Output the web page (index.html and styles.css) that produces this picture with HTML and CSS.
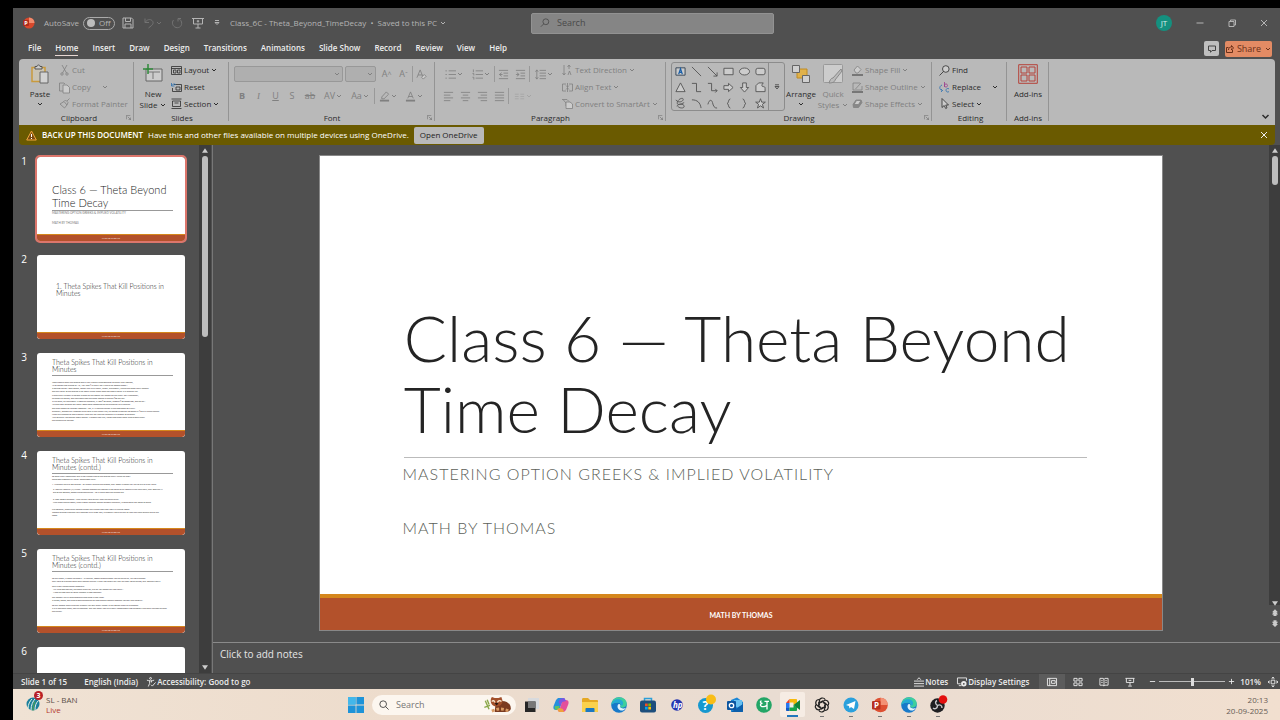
FILE: index.html
```html
<!DOCTYPE html>
<html lang="en">
<head>
<meta charset="utf-8">
<title>Class_6C - Theta_Beyond_TimeDecay</title>
<link rel="stylesheet" href="styles.css">
</head>
<body>
<svg class="defs" aria-hidden="true">
  <symbol id="caret" viewBox="0 0 6 6"><path d="M1 2l2 2 2-2"/></symbol>
  <symbol id="launch" viewBox="0 0 7 7"><path d="M.5 6V.5H6M2.500 2.500l4 4M6.500 3.500v3h-3"/></symbol>
  <symbol id="close" viewBox="0 0 8 8"><path d="M1 1l6 6M7 1L1 7"/></symbol>
  <symbol id="edge" viewBox="0 0 16 16"><circle cx="8" cy="8" r="7.800" fill="#1679c9"/><path d="M.4 8C.4 3.500 3.800.2 8.200.2c4.600 0 7.600 3.100 7.600 6.400 0 2.500-1.900 4.100-4.300 4.100-1.800 0-2.600-.8-2.100-1.700.9-1.900-.6-3.500-3-3.500C3.600 5.500 1.300 6.500.4 8z" fill="#3fcf9c"/><path d="M.4 8C1 4 4 2.200 7.200 2.200c3 0 5 1.800 4.900 4.400-.1 1.300-.8 2-1.200 2.400-.7-2-2.300-3.600-4.700-3.500C3.600 5.500 1.300 6.500.4 8z" fill="#23a9d6"/><path d="M9.400 8.600c-.8 1.200.1 2.900 2.600 2.900 1.300 0 2.300-.4 2.900-.8-.9 2.200-3.200 3.200-5.200 2.700C6.900 12.700 5.800 10 7 7.600c.8-1 2.200-.6 2.400 1z" fill="#dff3fb"/></symbol>
</svg>

<div class="app">
  <header class="titlebar">
    <svg class="logo" viewBox="0 0 12 12"><circle cx="6" cy="6" r="5.500" fill="#d8472b"/><path d="M6 .5A5.500 5.500 0 0 1 11.500 6H6z" fill="#f08b6d"/><rect x="0" y="3" width="6" height="6" rx="1" fill="#b02a1b"/><text x="1.300" y="8" font-size="5.500" font-weight="700" fill="#fff">P</text></svg>
    <label class="autosave">AutoSave <input type="checkbox"><span class="switch">Off</span></label>
    <div class="quick">
      <button aria-label="Save"><svg viewBox="0 0 12 12"><path d="M1 1h8.500L11 2.500V11H1zM3.500 1v3.500h5V1M3 11V7h6v4"/></svg></button>
      <button aria-label="Undo" class="faint wide"><svg viewBox="0 0 12 12"><path d="M2 1.500v4h4M2.200 5.300C4 2.500 7 1.800 9 3.500c2 1.800 1 4-1 5.500L5.500 11"/></svg><svg class="caret"><use href="#caret"/></svg></button>
      <button aria-label="Redo" class="faint"><svg viewBox="0 0 12 12"><path d="M2.500 3C.5 5.500 1.500 9.500 5 10.500s6.500-2 5.500-5.500C10 3 8.500 2 7.500 1.800M7 4.500V1.500h3"/></svg></button>
      <button aria-label="Start slide show"><svg viewBox="0 0 12 12"><path d="M0 1.500h12M1.500 1.500v5.500h9V1.500M6 7v4M3.500 11h5M6 3v2.500M4.800 4.200h2.400"/></svg></button>
      <button aria-label="Customize"><svg class="caret" viewBox="0 0 6 6"><path d="M1 .5h4M1 2.500l2 2 2-2z"/></svg></button>
    </div>
    <h1>Class_6C - Theta_Beyond_TimeDecay &nbsp;•&nbsp; Saved to this PC <svg class="caret"><use href="#caret"/></svg></h1>
    <label class="search"><svg viewBox="0 0 12 12"><circle cx="7" cy="4.500" r="3.500"/><path d="M4.500 7L1 10.500"/></svg><input type="text" placeholder="Search" aria-label="Search"></label>
    <div class="window">
      <span class="avatar">JT</span>
      <button aria-label="Minimize"><svg viewBox="0 0 8 8"><path d="M.5 4h7"/></svg></button>
      <button aria-label="Restore"><svg viewBox="0 0 8 8"><path d="M1 2.500h5v5H1zM2.500 2.500V1h5v5H6"/></svg></button>
      <button aria-label="Close"><svg viewBox="0 0 8 8"><use href="#close"/></svg></button>
    </div>
  </header>

  <nav class="tabs">
    <a href="#file">File</a><a href="#home" class="active">Home</a><a href="#insert">Insert</a><a href="#draw">Draw</a><a href="#design">Design</a><a href="#transitions">Transitions</a><a href="#animations">Animations</a><a href="#slideshow">Slide Show</a><a href="#record">Record</a><a href="#review">Review</a><a href="#view">View</a><a href="#help">Help</a>
    <button class="comment" aria-label="Comments"><svg viewBox="0 0 8 8"><path d="M.5 1h7v4.500H4L2.500 7.300V5.500h-2z"/></svg></button>
    <button class="share"><svg viewBox="0 0 8 8"><path d="M2.500 2.500h-2v5h6V5M2.500 5c0-2 1-3 3-3V.5L7.500 3 5.500 5V3.500"/></svg>Share <svg class="caret"><use href="#caret"/></svg></button>
  </nav>

  <section class="ribbon">
    <div class="group clipboard">
      <div class="body">
        <button class="big"><svg viewBox="0 0 20 20"><path d="M2 3.500h13v14H2z" fill="#c9c3b4" stroke="#c99a3c" stroke-width="1.500"/><path d="M5 5V2.500h2C7 .5 10 .5 10 2.500h2V5z" fill="#ccc" stroke="#555"/><path d="M10 8h8v11h-8z" fill="#d2d2d2" stroke="#666"/></svg><span>Paste</span><svg class="caret"><use href="#caret"/></svg></button>
        <div class="stack off">
          <button><svg viewBox="0 0 11 11"><path d="M3 0l4.500 8M8 0L3.500 8"/><circle cx="3" cy="9" r="1.200"/><circle cx="8" cy="9" r="1.200"/></svg>Cut</button>
          <button><svg viewBox="0 0 11 11"><path d="M4 9H.5V1H5l1 1" /><path d="M4 3h4l2.500 2.500V11H4z" fill="#ccc"/></svg>Copy <svg class="caret gap"><use href="#caret"/></svg></button>
          <button><svg viewBox="0 0 11 11"><path d="M1 6l4-2.500L8 7l-2.500 3zM5 3.500L6.500 2 9 4.500 8 7M8 3l2.500-2.500"/></svg>Format Painter</button>
        </div>
      </div>
      <h2>Clipboard<svg class="launch"><use href="#launch"/></svg></h2>
    </div>

    <div class="group slides">
      <div class="body">
        <button class="big"><svg viewBox="0 0 20 20"><path d="M3 5h16v12H3z" fill="#ccc" stroke="#666"/><path d="M5 8h12M10 8v7" stroke="#777"/><path d="M5 0v10M0 5h10" stroke="#2f8a3a" stroke-width="1.500"/></svg><span>New<br>Slide <svg class="caret"><use href="#caret"/></svg></span></button>
        <div class="stack">
          <button><svg viewBox="0 0 11 11"><path d="M.5 1.500h10v8H.5zM.5 3.500h10" /><path d="M2.500 5h2.500v3H2.500zM6.500 5H9v3H6.500z"/></svg>Layout <svg class="caret"><use href="#caret"/></svg></button>
          <button><svg viewBox="0 0 11 11"><path d="M3 2.500h7.500v7H1.500V6"/><path d="M.5 1v3h3M.8 3.600C2 1.500 4 1.500 5 3" stroke="#2a6fb0"/><path d="M5 5h4v3H5z"/></svg>Reset</button>
          <button><svg viewBox="0 0 11 11"><path d="M.5 1h10M.5 10.500h10M1.500 3h8v5.500h-8z"/><path d="M3.500 5h4"/></svg>Section <svg class="caret"><use href="#caret"/></svg></button>
        </div>
      </div>
      <h2>Slides</h2>
    </div>

    <div class="group font">
      <div class="body rows off">
        <div class="line">
          <span class="combo name"><select aria-label="Font"><option></option></select><svg class="caret"><use href="#caret"/></svg></span>
          <span class="combo size"><select aria-label="Font size"><option></option></select><svg class="caret"><use href="#caret"/></svg></span>
          <button class="c18 up">A<sup>^</sup></button><button class="c18">A<sup>ˇ</sup></button><i class="sep"></i><button class="c18" aria-label="Clear formatting"><svg viewBox="0 0 12 12"><path d="M1 9.500L4.500 1 8 9.500M2.200 6.500h4.600"/><path d="M6 9l3-3 2 2-3 3z" fill="#ccc"/></svg></button>
        </div>
        <div class="line">
          <button class="c16"><b>B</b></button><button class="c17 serif"><em>I</em></button><button class="c17"><u>U</u></button><button class="c16">S</button><button class="c20"><s>ab</s></button><button class="c26">AV<svg class="caret"><use href="#caret"/></svg></button><button class="c28">Aa<svg class="caret"><use href="#caret"/></svg></button><i class="sep"></i><button class="c26" aria-label="Highlight"><svg viewBox="0 0 12 12"><path d="M3 6.500L8 1l2.500 2.500-5 5H3z"/><path d="M1 10.500h10" stroke-width="2"/></svg><svg class="caret"><use href="#caret"/></svg></button><button class="c26" aria-label="Font colour"><svg viewBox="0 0 12 12"><path d="M3 8l3-7 3 7M4 6h4"/><path d="M1 10.500h10" stroke-width="2"/></svg><svg class="caret"><use href="#caret"/></svg></button>
        </div>
      </div>
      <h2>Font<svg class="launch"><use href="#launch"/></svg></h2>
    </div>

    <div class="group paragraph">
      <div class="body">
        <div class="rows off">
          <div class="line">
            <button class="c27" aria-label="Bullets"><svg viewBox="0 0 12 12"><path d="M4 2h8M4 6h8M4 10h8M.5 2H2M.5 6H2M.5 10H2"/></svg><svg class="caret"><use href="#caret"/></svg></button>
            <button class="c27" aria-label="Numbering"><svg viewBox="0 0 12 12"><path d="M4 2h8M4 6h8M4 10h8M1.500.5v3M.5 5h1.500v2M.5 9h1.500v2.500"/></svg><svg class="caret"><use href="#caret"/></svg></button><i class="sep"></i>
            <button class="c17" aria-label="Decrease indent"><svg viewBox="0 0 12 12"><path d="M1 1.500h10M6 4.500h5M6 7.500h5M1 10.500h10M4 4L1.500 6 4 8M1.500 6H5"/></svg></button>
            <button class="c17" aria-label="Increase indent"><svg viewBox="0 0 12 12"><path d="M1 1.500h10M6 4.500h5M6 7.500h5M1 10.500h10M2 4l2.500 2L2 8M1 6h3.500"/></svg></button><i class="sep"></i>
            <button class="c27" aria-label="Line spacing"><svg viewBox="0 0 12 12"><path d="M5 1.500h7M5 4.500h7M5 7.500h7M5 10.500h7M2 1v10M.5 3L2 1l1.500 2M.5 9L2 11l1.500-2"/></svg><svg class="caret"><use href="#caret"/></svg></button>
          </div>
          <div class="line">
            <button class="c17" aria-label="Align left"><svg viewBox="0 0 12 12"><path d="M1 1.500h10M1 4.500h7M1 7.500h10M1 10.500h7"/></svg></button>
            <button class="c17" aria-label="Centre"><svg viewBox="0 0 12 12"><path d="M1 1.500h10M3 4.500h6M1 7.500h10M3 10.500h6"/></svg></button>
            <button class="c17" aria-label="Align right"><svg viewBox="0 0 12 12"><path d="M1 1.500h10M4 4.500h7M1 7.500h10M4 10.500h7"/></svg></button>
            <button class="c17" aria-label="Justify"><svg viewBox="0 0 12 12"><path d="M1 1.500h10M1 4.500h10M1 7.500h10M1 10.500h10"/></svg></button><i class="sep"></i>
            <button class="c27 faint" aria-label="Columns"><svg viewBox="0 0 12 12"><path d="M1 3.500h4M7 3.500h4M1 6h4M7 6h4M1 8.500h4M7 8.500h4"/></svg><svg class="caret"><use href="#caret"/></svg></button>
          </div>
        </div>
        <div class="stack off">
          <button><svg viewBox="0 0 11 11"><path d="M2 0v10M.5 8L2 10l1.500-2M7 0v4M5.500 2L7 0l1.500 2M6 10l1.500-4L9 10"/></svg>Text Direction <svg class="caret"><use href="#caret"/></svg></button>
          <button><svg viewBox="0 0 11 11"><path d="M4 2H.5v7H4M7 2h3.500v7H7M5.500 1v9M4 3.500L5.500 5 7 3.500M4 7.500L5.500 6 7 7.500"/></svg>Align Text <svg class="caret"><use href="#caret"/></svg></button>
          <button><svg viewBox="0 0 11 11"><path d="M0 1.500h5M1 1.500L4 5v3M5 1.500l2 2"/><path d="M4 4h4l2.500 2v4.500H4z" fill="#ccc"/></svg>Convert to SmartArt <svg class="caret"><use href="#caret"/></svg></button>
        </div>
      </div>
      <h2>Paragraph<svg class="launch"><use href="#launch"/></svg></h2>
    </div>

    <div class="group drawing">
      <div class="body">
        <div class="gallery">
          <div class="shapes">
            <button aria-label="Text box"><svg viewBox="0 0 12 12"><path d="M1 2h10v8H1z" fill="#ccc" stroke="#345"/><path d="M4 9l2-6 2 6M4.700 7h2.600" stroke="#1a5fa8" stroke-width="1.300"/></svg></button>
            <button aria-label="Line"><svg viewBox="0 0 12 12"><path d="M1 1l10 10"/></svg></button>
            <button aria-label="Arrow"><svg viewBox="0 0 12 12"><path d="M1 1l10 10M11 7v4H7"/></svg></button>
            <button aria-label="Rectangle"><svg viewBox="0 0 12 12"><path d="M1 2.500h10v7H1z" fill="#ccc"/></svg></button>
            <button aria-label="Oval"><svg viewBox="0 0 12 12"><ellipse cx="6" cy="6" rx="5.500" ry="3.800" fill="#ccc"/></svg></button>
            <button aria-label="Rounded rectangle"><svg viewBox="0 0 12 12"><rect x="1" y="2.500" width="10" height="7" rx="2" fill="#ccc"/></svg></button>
            <button aria-label="Triangle"><svg viewBox="0 0 12 12"><path d="M6 1l5 9.500H1z" fill="#ccc"/></svg></button>
            <button aria-label="Elbow"><svg viewBox="0 0 12 12"><path d="M1 1.500h5v9h5"/></svg></button>
            <button aria-label="Elbow arrow"><svg viewBox="0 0 12 12"><path d="M1 1.500h4v8h6M9 7.500l2 2-2 2"/></svg></button>
            <button aria-label="Right arrow"><svg viewBox="0 0 12 12"><path d="M1 4h5V1.500L11 6l-5 4.500V8H1z" fill="#ccc"/></svg></button>
            <button aria-label="Down arrow"><svg viewBox="0 0 12 12"><path d="M4 1v5H1.500L6 11l4.500-5H8V1z" fill="#ccc"/></svg></button>
            <button aria-label="Freeform"><svg viewBox="0 0 12 12"><path d="M1 10.500V4l3-3h5C7 3 7 5 9 5c1.500 0 2 .5 2 2v3.500z" fill="#ccc"/></svg></button>
            <button aria-label="Scribble"><svg viewBox="0 0 12 12"><path d="M1 2c2 4 8 2 8-.5S3 1 2.500 5 8 6 10 5M2 9c1-3 8-3 8 0s-6 2-7 0"/></svg></button>
            <button aria-label="Arc"><svg viewBox="0 0 12 12"><path d="M1 2c6 0 9 3 10 9"/></svg></button>
            <button aria-label="Curve"><svg viewBox="0 0 12 12"><path d="M1 7c1-5 4-6 5-2s2 6 5 6"/></svg></button>
            <button aria-label="Left brace"><svg viewBox="0 0 12 12"><path d="M8 1C5.500 1 6.500 6 4.500 6c2 0 1 5 3.500 5"/></svg></button>
            <button aria-label="Right brace"><svg viewBox="0 0 12 12"><path d="M4 1c2.500 0 1.500 5 3.500 5-2 0-1 5-3.500 5"/></svg></button>
            <button aria-label="Star"><svg viewBox="0 0 12 12"><path d="M6 .8l1.300 3.700h4L8.100 6.900l1.200 4L6 8.500l-3.300 2.400 1.200-4L.7 4.500h4z" fill="#ccc"/></svg></button>
          </div>
          <button class="more" aria-label="More shapes"><svg class="caret" viewBox="0 0 6 6"><path d="M1 .8h4M1 2.500l2 2.500 2-2.500z"/></svg></button>
        </div>
        <button class="big arrange"><svg viewBox="0 0 20 20"><path d="M6 5h10v9H6z" fill="#e0b14a" stroke="#c08c22"/><path d="M1.500 1.500h7v7h-7zM11.500 11.500h7v7h-7z" fill="#d0d0d0" stroke="#666"/></svg><span>Arrange</span><svg class="caret"><use href="#caret"/></svg></button>
        <button class="big off"><svg viewBox="0 0 20 20"><rect x=".5" y=".5" width="19" height="18" rx="1" fill="#ccc" stroke="#999"/><path d="M18 5l-8 9c-2 0-3 2-4 5 3 0 6-1 6-3l7-9z" fill="#bbb" stroke="#888"/></svg><span>Quick<br>Styles <svg class="caret"><use href="#caret"/></svg></span></button>
        <div class="stack off">
          <button><svg viewBox="0 0 11 11"><path d="M2 5l3.500-4L9 4.500 6 8H4z" fill="#ccc"/><path d="M0 10h11" stroke-width="2" stroke="#777"/></svg>Shape Fill <svg class="caret"><use href="#caret"/></svg></button>
          <button><svg viewBox="0 0 11 11"><path d="M8 1H1v7h9V4M3.500 7L9 1"/><path d="M0 10h11" stroke-width="2" stroke="#777"/></svg>Shape Outline <svg class="caret"><use href="#caret"/></svg></button>
          <button><svg viewBox="0 0 11 11"><path d="M1 6.500L4 2h5l1 2.500L6.500 9.500h-5z" fill="#888"/><path d="M2 6.500L4.500 2.500H9L6.500 6.500z" fill="#ccc"/></svg>Shape Effects <svg class="caret"><use href="#caret"/></svg></button>
        </div>
      </div>
      <h2>Drawing<svg class="launch"><use href="#launch"/></svg></h2>
    </div>

    <div class="group editing">
      <div class="body">
        <div class="stack">
          <button><svg viewBox="0 0 11 11"><circle cx="6.800" cy="4" r="3.300" fill="#ccc"/><path d="M4.500 6.500L.5 10.500"/></svg>Find</button>
          <button><svg viewBox="0 0 11 11"><path d="M3 3C0 4 0 8 3.500 8.500M2 7l1.500 1.500L2 10" stroke="#2a6fb0"/><path d="M5.500 0v5M5.500 3.500c0-2 3-2 3 0s-3 2-3 0" stroke="#9a3a8a"/><path d="M10 6.800c-2-1-3 .3-3 1.500s1.500 2.500 3 1.300" stroke="#2a6fb0"/></svg>Replace <svg class="caret gap"><use href="#caret"/></svg></button>
          <button><svg viewBox="0 0 11 11"><path d="M3 .5v9L5.200 7.500l1.500 3 1.300-.7-1.300-2.800H9.500z" fill="#ccc"/></svg>Select <svg class="caret"><use href="#caret"/></svg></button>
        </div>
      </div>
      <h2>Editing</h2>
    </div>

    <div class="group addins">
      <div class="body">
        <button class="big"><svg viewBox="0 0 20 20"><path d="M.7.7h18.600v18.600H.7zM3 3h6v6H3zM11 3h6v6h-6zM3 11h6v6H3zM11 11h6v6h-6z" stroke="#b5433a"/></svg><span>Add-ins</span></button>
      </div>
      <h2>Add-ins</h2>
    </div>
    <button class="collapse" aria-label="Collapse ribbon"><svg class="caret"><use href="#caret"/></svg></button>
  </section>

  <aside class="message">
    <svg viewBox="0 0 11 11"><path d="M5.500 1l4.800 9H.7z" fill="#7a4a10" stroke="#eea53c"/><path d="M5.500 4v3M5.500 8v1" stroke="#fff"/></svg>
    <strong>BACK UP THIS DOCUMENT</strong>
    <span>Have this and other files available on multiple devices using OneDrive.</span>
    <button>Open OneDrive</button>
    <button class="dismiss" aria-label="Dismiss"><svg viewBox="0 0 8 8"><use href="#close"/></svg></button>
  </aside>

  <main class="work">
    <ol class="thumbs">
      <li><span>1</span><div class="thumb cover selected"><h3>Class 6 — Theta Beyond Time Decay</h3><p>MASTERING OPTION GREEKS &amp; IMPLIED VOLATILITY</p><p>MATH BY THOMAS</p><footer>MATH BY THOMAS</footer></div></li>
      <li><span>2</span><div class="thumb section"><h3>1. Theta Spikes That Kill Positions in Minutes</h3><footer>MATH BY THOMAS</footer></div></li>
      <li><span>3</span><div class="thumb"><h3>Theta Spikes That Kill Positions in Minutes</h3>
        <div class="copy"><p>Most traders enter the market with a very simple understanding of theta. They assume,<br>“If an option has a theta of -10, I will lose ₹10 every day if the price doesn’t move.”<br>It sounds logical: “One strong, steady tick like a clock”, neatly, predictably, ticking the same every second.<br>But the reality of the market is far more brutal: theta does not always decay in a straight line.</p>
        <p>Picture this: a trader is holding a short at-the-money call option on the index. On Wednesday,<br>he takes his option, and calculates that the theta impact is around ₹30 per day.<br>In his mind, he calculates: “If nothing happens, I’ll lose ₹30 today, another ₹30 tomorrow, and so on.”<br>He feels safe because the decay looks small compared to the premium he is holding.</p>
        <p>But then comes an intraday moment – say, a 15-minute candle in the afternoon on expiry.<br>Suddenly, without any dramatic price shift in the underlying, his option premium collapses by ₹80 in a single candle.<br>What he expected to lose gradually over the day has just vanished in a matter of minutes.<br>He’s stunned. The option looks “stolen”. It wasn’t bad luck; it was how theta decay accelerates under<br>the pressure of volume.</p></div><footer>MATH BY THOMAS</footer></div></li>
      <li><span>4</span><div class="thumb tight"><h3>Theta Spikes That Kill Positions in Minutes (contd.)</h3>
        <div class="copy"><p>So what really happened? This is the hidden side of the market rarely visible to retail.<br>Theta was distorted by three “accelerator keys”.</p>
        <p>1. Widening the bid-ask spread – By slightly shifting the quotes, they made it harder for you to exit at a fair value.</p>
        <p class="in">2. Implied Volatility (IV) Crush – Traders assume the market is not going to be volatile in the next hour, they took the IV<br>out of the options, option premiums shrink – as if a part was just sucked out.</p>
        <p class="in">3. Gap–Based Theming – They quietly paid quickly near the strike price.<br>With theta scaling faster, even a small intraday option became less sticky, exaggerating the effect of theta.</p>
        <p>Put together, these three actions create the illusion that time itself is running faster.<br>Instead of theta bleeding your position like a slow leak, it suddenly feels like the oxygen has been sucked out of the<br>room.</p></div><footer>MATH BY THOMAS</footer></div></li>
      <li><span>5</span><div class="thumb"><h3>Theta Spikes That Kill Positions in Minutes (contd.)</h3>
        <div class="copy loose"><p>To the trader, it looks like magic – in reverse, cosmic manipulation. But to the seller, it’s just business.<br>They sold at a decent when their option expires. If they can make you “pay for time” twice as fast, why wouldn’t they?</p>
        <p>This is why traders often complain:<br>&nbsp; “My view was correct, the stock didn’t fall, but my call option still lost value.”<br>&nbsp; “How did two days of decay happen in two candles?”</p>
        <p>The answer lies in understanding that theta is not linear.<br>It bends, twists, and accelerates depending on how market makers manage liquidity and volatility.</p>
        <p>So the lesson? Don’t trust the number you see under “theta” in the option chain as a promise.<br>It is a reference point, not a guarantee. The real decay can be brutally compressed into seconds if the seller decides to push<br>the trigger.</p></div><footer>MATH BY THOMAS</footer></div></li>
      <li><span>6</span><div class="thumb"></div></li>
    </ol>
    <div class="scroll left"><svg viewBox="0 0 8 6"><path d="M4 0l4 6H0z"/></svg><i></i><svg viewBox="0 0 8 6"><path d="M0 0h8L4 6z"/></svg></div>
    <section class="editor">
      <div class="stage">
        <div class="canvas">
          <article class="slide">
            <h2>Class 6 — Theta Beyond Time Decay</h2>
            <p>MASTERING OPTION GREEKS &amp; IMPLIED VOLATILITY</p>
            <p>MATH BY THOMAS</p>
            <footer>MATH BY THOMAS</footer>
          </article>
        </div>
        <div class="scroll right"><svg viewBox="0 0 8 6"><path d="M4 0l4 6H0z"/></svg><i></i><svg viewBox="0 0 8 6"><path d="M0 0h8L4 6z"/></svg><svg class="page" viewBox="0 0 8 10"><path d="M4 0l4 4H6l2 3H6v2H2V7H0l2-3H0z"/></svg><svg class="page" viewBox="0 0 8 10"><path d="M4 9l4-4H6l2-3H6V0H2v2H0l2 3H0z"/></svg></div>
      </div>
      <textarea class="notes" aria-label="Notes" placeholder="Click to add notes"></textarea>
    </section>
  </main>

  <footer class="status">
    <span class="count">Slide 1 of 15</span><span class="lang">English (India)</span>
    <button><svg viewBox="0 0 11 11"><circle cx="5" cy="1.500" r="1"/><path d="M1 3.500c3 1 5 1 8 0M4 4v3l-1.500 3.500M6 4v2M5.500 8.500l1.500 1.500 3.500-4"/></svg>Accessibility: Good to go</button>
    <div class="tools">
      <button><svg viewBox="0 0 11 11"><path d="M0 4.500h11M0 7.300h11M0 10h11M3.500 3L5.500.8 7.500 3"/></svg>Notes</button>
      <button class="display"><svg viewBox="0 0 11 11"><path d="M4 7.500H.5V1h10v3M2 9.500h3"/><circle cx="7.500" cy="7.500" r="2" stroke-width="2"/></svg>Display Settings</button>
      <div class="views">
      <button class="on" aria-label="Normal"><svg viewBox="0 0 11 11"><path d="M.5 1.500h10v8H.5zM3 1.500v8M5 4h4v3H5z"/></svg></button>
      <button aria-label="Slide sorter"><svg viewBox="0 0 11 11"><path d="M1 1.500h3.500v3H1zM6.500 1.500H10v3H6.500zM1 6.500h3.500v3H1zM6.500 6.500H10v3H6.500z"/></svg></button>
      <button aria-label="Reading view"><svg viewBox="0 0 11 11"><path d="M5.500 2v8M1 1.500h3.500l1 1 1-1H10V9H6.500l-1 1-1-1H1zM2.500 4h1.500M2.500 6h1.500M7 4h1.500M7 6h1.500"/></svg></button>
      <button aria-label="Slide show"><svg viewBox="0 0 11 11"><path d="M.5 1.500h10M1.500 1.500v4.500h8V1.500M5.500 6v3.500M3.500 10h4M4 3.700h3"/></svg></button>
      </div>
      <button aria-label="Zoom out"><svg class="sm" viewBox="0 0 8 8"><path d="M1 4h6"/></svg></button>
      <input type="range" min="0" max="100" value="50" aria-label="Zoom">
      <button aria-label="Zoom in"><svg class="sm" viewBox="0 0 8 8"><path d="M1 4h6M4 1v6"/></svg></button>
      <span class="pct">101%</span>
      <button aria-label="Fit"><svg viewBox="0 0 11 11"><path d="M3.500 3.500h4v4h-4zM5.500 0v2M5.500 9v2M0 5.500h2M9 5.500h2M4 1.500L5.500.3 7 1.500M4 9.500l1.500 1.200L7 9.500M1.500 4L.3 5.500 1.500 7M9.500 4l1.200 1.500L9.500 7"/></svg></button>
    </div>
  </footer>

  <footer class="taskbar">
    <a class="widget" href="#score"><span class="globe"><svg viewBox="0 0 16 16"><circle cx="8" cy="9" r="6.500" fill="#1b7f9e"/><path d="M3 14c0-5 2-8 4-10M6 15c0-5 2-9 4-11M10 15c0-4 1-7 3-9" style="stroke:#e6f2e2" fill="none"/><path d="M8 15.500c0-4 1-7 2-9" style="stroke:#58a843" fill="none"/></svg><b>3</b></span><span>SL - BAN<br><em>Live</em></span></a>
    <nav class="apps">
      <button aria-label="Start"><svg viewBox="0 0 16 16"><path d="M0 0h7.600v7.600H0zM8.400 0H16v7.600H8.400zM0 8.400h7.600V16H0zM8.400 8.400H16V16H8.400z" fill="#1e93d8"/><path d="M0 0h7.600v7.600H0z" fill="#43b7ea"/></svg></button>
      <label class="find"><svg viewBox="0 0 12 12"><circle cx="5" cy="5" r="4"/><path d="M8 8l3.500 3.500"/></svg><input type="text" placeholder="Search" aria-label="Search taskbar">
        <svg class="panda" viewBox="0 0 30 18"><path d="M1 5l4 9M0 12l6-2M3 4l2 5" stroke="#8aa84a" stroke-width="1.500"/><path d="M12 7c7-4 16-1 16 6 0 3-3 4-8 4h-9z" fill="#7a3a20"/><path d="M8 16c6-3 12-3 18 0" stroke="#d99a62" stroke-width="3" stroke-dasharray="3 2"/><path d="M7 3l1-2 3 1h4l3-1 1 3c1 3-1 7-6 7S6 7 7 3z" fill="#a24f2a"/><path d="M8 6c1-2 3-1 3 1M14 7c0-2 3-3 4-1" stroke="#f3dfc8" stroke-width="1.500"/><path d="M11 8c1-1 3-1 4 0l-2 2z" fill="#2b1a14"/></svg></label>
      <button aria-label="Task view"><svg viewBox="0 0 16 16"><path d="M4 1h11v11H4z" fill="#d8dadd"/><path d="M1 4.500h10.500V15H1z" fill="#262626"/><path d="M4 4.500h7.500V11H4z" fill="#777"/></svg></button>
      <button aria-label="Copilot"><svg viewBox="0 0 16 16"><path d="M5 1h5l2 3-3 1-2 6-2 2H3C0 13 0 10 1 8l2-5z" fill="#258fdd"/><path d="M11 15H6l-2-3 3-1 2-6 2-2h2c3 0 3 3 2 5l-2 5z" fill="#e34f9b"/><path d="M10 1h1.500L13 4l-2 .5L9 5 7.500 9 5.500 5 7 2z" fill="#7b57e0"/><path d="M2 9h4.500L6 12l-2 1c-2 0-3-2-2-4z" fill="#58c26a"/><path d="M4 12l3-1 3 1 1 3H6z" fill="#f0a03c"/></svg></button>
      <button aria-label="File Explorer"><svg viewBox="0 0 16 16"><path d="M0 2.500C0 1.700.5 1 1.300 1H6l2 2h7c.6 0 1 .5 1 1v10c0 .6-.4 1-1 1H1c-.6 0-1-.4-1-1z" fill="#e5a823"/><path d="M0 5h16v9c0 .6-.4 1-1 1H1c-.6 0-1-.4-1-1z" fill="#fad14c"/><path d="M3.500 15v-3c0-.6.4-1 1-1h7c.6 0 1 .4 1 1v3z" fill="#1a78c2"/></svg></button>
      <button aria-label="Edge"><svg><use href="#edge"/></svg></button>
      <button aria-label="Microsoft Store"><svg viewBox="0 0 16 16"><path d="M4.500 4V1.500h7V4" style="stroke:#2c9fd8" fill="none" stroke-width="1.500"/><rect y="3.500" width="16" height="12" rx="2" fill="#1d4e7c"/><path d="M5 6.500h2.700v2.700H5z" fill="#f25022"/><path d="M8.300 6.500H11v2.700H8.300z" fill="#7fba00"/><path d="M5 9.800h2.700v2.700H5z" fill="#00a4ef"/><path d="M8.300 9.800H11v2.700H8.300z" fill="#ffb900"/></svg></button>
      <button aria-label="HP"><svg viewBox="0 0 16 16"><circle cx="8" cy="8" r="5.800" fill="#2635b0"/><text x="4" y="10.500" font-size="8" font-style="italic" font-weight="700" fill="#fff">hp</text></svg></button>
      <button aria-label="Help"><svg viewBox="0 0 16 16"><circle cx="7.500" cy="8.500" r="7.500" fill="#1698cf"/><text x="4.500" y="13" font-size="12" font-weight="700" fill="#fff">?</text><circle cx="13" cy="2.500" r="5" fill="#f9bd16"/></svg></button>
      <button aria-label="Outlook"><svg viewBox="0 0 16 16"><path d="M4 3l6-2.500L16 5v9c0 .6-.4 1-1 1H5c-.6 0-1-.4-1-1z" fill="#1c87d6"/><path d="M7 3h8v5l-4 3-4-3z" fill="#69c0f0"/><path d="M4 15L16 7v7c0 .6-.4 1-1 1z" fill="#0c5fab"/><rect y="4" width="9" height="9" rx="1" fill="#0b55a0"/><circle cx="4.500" cy="8.500" r="2.200" fill="none" stroke="#fff" stroke-width="1.300"/></svg></button>
      <button aria-label="Dhan"><svg viewBox="0 0 16 16"><circle cx="8" cy="8" r="7.800" fill="#23a566"/><path d="M5.500 4C3.800 4 4 6.300 6.500 6.300 4.500 6.300 4 8 5 9c1.300 1.200 4 .8 5.500-.5M8.500 4.300h4.500M11 4.300V12.500" fill="none" stroke="#fff" stroke-width="1.300"/></svg></button>
      <button class="current" aria-label="Google Meet"><svg viewBox="0 0 16 16"><path d="M4.500 2H11c.6 0 1 .4 1 1v3l-3.500 2V5.500h-4z" fill="#f7b90b"/><path d="M4.500 2v4H1z" fill="#e8402f"/><path d="M1 6h3.500v5H1z" fill="#2879f0"/><path d="M1 11h3.500v3H2c-.6 0-1-.4-1-1z" fill="#1459c4"/><path d="M4.500 10.500h4V8L12 10v3c0 .6-.4 1-1 1H4.500z" fill="#18a54b"/><path d="M8.500 8L15 3v10z" fill="#12833a"/></svg></button>
      <button class="open" aria-label="ChatGPT"><svg viewBox="0 0 16 16"><g fill="none" stroke="#222" stroke-width="1.200"><path d="M5.300 8.500V4.200c0-3.300 4.300-4.400 6-1.500M5.300 5.800L9 3.700"/><path d="M5.300 8.500V4.200c0-3.300 4.300-4.400 6-1.500M5.300 5.800L9 3.700" transform="rotate(60 8 8)"/><path d="M5.300 8.500V4.200c0-3.300 4.300-4.400 6-1.500M5.300 5.800L9 3.700" transform="rotate(120 8 8)"/><path d="M5.300 8.500V4.200c0-3.300 4.300-4.400 6-1.500M5.300 5.800L9 3.700" transform="rotate(180 8 8)"/><path d="M5.300 8.500V4.200c0-3.300 4.300-4.400 6-1.500M5.300 5.800L9 3.700" transform="rotate(240 8 8)"/><path d="M5.300 8.500V4.200c0-3.300 4.300-4.400 6-1.500M5.300 5.800L9 3.700" transform="rotate(300 8 8)"/></g></svg></button>
      <button class="open" aria-label="Telegram"><svg viewBox="0 0 16 16"><circle cx="8" cy="8" r="7.500" fill="#2ba0dc"/><path d="M3 8l9.500-4L11 12l-3-2-1.500 1.500-.5-2.500z" fill="#fff"/></svg></button>
      <button class="open" aria-label="PowerPoint"><svg viewBox="0 0 16 16"><circle cx="8.500" cy="8" r="7.300" fill="#dd4f32"/><path d="M8.500.7A7.300 7.300 0 0 1 15.800 8H8.500z" fill="#f39175"/><rect y="4" width="8.500" height="8.500" rx="1" fill="#b9301f"/><text x="2" y="11" font-size="8" font-weight="700" fill="#fff">P</text></svg></button>
      <button class="open" aria-label="Edge window"><svg><use href="#edge"/></svg></button>
      <button class="open" aria-label="OBS"><svg viewBox="0 0 16 16"><circle cx="7.500" cy="8.500" r="7.200" fill="#1f1f22"/><path d="M7.500 8.500C5 7 5 4.500 7 3.500M7.500 8.500c2.500-1.500 4.500 0 4.500 2.500M7.500 8.500c0 3-2.500 4-4.500 2.500" stroke="#c9c9cc" stroke-width="1.400" fill="none"/><circle cx="13" cy="2.500" r="4.300" fill="#e3100f"/></svg></button>
    </nav>
    <time>20:13<br>20-09-2025</time>
  </footer>
</div>
</body>
</html>
```
FILE: styles.css
```css
* { box-sizing: border-box; }
body { margin: 0; background: #000; font: 8px/12px "Open Sans", "Noto Sans", sans-serif; color: #fff; }
button, input, select, textarea { font: inherit; color: inherit; background: none; border: 0; padding: 0; margin: 0; outline: 0; }
button { display: flex; align-items: center; justify-content: center; white-space: nowrap; }
a { color: inherit; text-decoration: none; }
h1, h2, h3, p, ol { margin: 0; padding: 0; font: inherit; }
svg { width: 12px; height: 12px; flex: none; fill: none; stroke: currentColor; overflow: visible; }
svg text { stroke: none; font-family: "Open Sans", sans-serif; }
.defs { position: absolute; width: 0; height: 0; }
.caret { width: 6px; height: 6px; margin-left: 1px; display: inline-block; }
.faint { opacity: .35; }

.app { min-height: 100vh; margin-left: 13px; border-top: 8px solid #000; background: #505050; display: flex; flex-direction: column; }

/* Title bar */
.titlebar { display: flex; align-items: center; height: 30px; padding: 0 12px 0 10px; color: #b4b4b4; }
.logo path, .logo rect, .logo circle { stroke: none; }
.autosave { display: flex; align-items: center; gap: 4px; margin-left: 9px; }
.autosave input { position: absolute; opacity: 0; }
.switch { display: flex; align-items: center; gap: 4px; width: 32px; height: 13px; padding-left: 3px; border: 1px solid #aaa; border-radius: 7px; }
.switch::before { content: ""; width: 8px; height: 8px; border-radius: 50%; background: #bdbdbd; }
.quick { display: flex; align-items: center; gap: 9px; margin-left: 7px; width: 108px; }
h1 { white-space: nowrap; width: 301px; }
.search { display: flex; align-items: center; gap: 7px; width: 243px; height: 21px; padding-left: 8px; background: #858585; border: 1px solid #929292; border-radius: 2px; color: #494949; font-size: 9px; }
.search input { flex: 1; min-width: 0; }
.search svg { width: 10px; height: 10px; }
input::placeholder, textarea::placeholder { color: inherit; opacity: 1; }
.window { display: flex; align-items: center; margin-left: auto; gap: 24px; }
.window svg { width: 8px; height: 8px; }
.avatar { width: 16px; height: 16px; border-radius: 50%; background: #14907f; color: #d5eee9; line-height: 16px; text-align: center; }

/* Tabs */
.tabs { display: flex; align-items: center; height: 21px; padding: 0 8px 0 15px; gap: 14px; font-weight: 600; color: #ededed; }
.tabs a { line-height: 14px; border-bottom: 1px solid transparent; }
.tabs .active { border-color: #e8d8d4; }
.comment { width: 15px; height: 15px; margin-left: auto; background: #bfbfbf; border-radius: 2px; color: #444; }
.share { height: 16px; width: 47px; gap: 3px; margin-left: -8px; background: #e38b64; border-radius: 2px; color: #6a3018; font-size: 9px; font-weight: 400; }
.comment svg, .share svg:first-child { width: 8px; height: 8px; }

/* Ribbon */
.ribbon { display: flex; margin: 0 5px 0 6px; background: #b9b9b9; border-radius: 4px 4px 0 0; color: #2c2c2c; height: 66px; }
.group { display: flex; flex-direction: column; position: relative; padding: 3px 5px 0; }
.group::after { content: ""; position: absolute; right: 0; top: 3px; bottom: 4px; width: 1px; background: #949494; }
.group h2 { text-align: center; line-height: 12px; height: 12px; }
.launch { position: absolute; right: 3px; bottom: 5px; width: 5px; height: 5px; color: #777; }
.body { display: flex; height: 50px; }
.big { flex-direction: column; justify-content: flex-start; line-height: 11px; gap: 1px; }
.big > svg:first-child { width: 20px; height: 20px; margin: 2px 0 3px; }
.big > .caret { margin: 1px 0 0; }
.stack { display: flex; flex-direction: column; }
.stack button { height: 17px; gap: 2px; justify-content: flex-start; }
.stack svg:first-child { width: 11px; height: 11px; stroke-width: .8; }
.stack .caret { margin-left: 0; }
.off { color: #808080; }
.stack .caret.gap { margin-left: 9px; }
.rows { flex-direction: column; padding-top: 2px; gap: 2px; display: flex; }
.line { display: flex; align-items: center; height: 20px; }
.line button { height: 18px; font-size: 9px; }
.line sup { font-size: 7px; line-height: 7px; }
.line svg:not(.caret) { width: 11px; height: 11px; stroke-width: .9; }
.serif { font-family: "Liberation Serif", serif; }
.sep { width: 1px; height: 16px; background: #999; }
.c16 { width: 16px; } .c17 { width: 17px; } .c18 { width: 17px; } .c20 { width: 20px; } .c26 { width: 26px; } .c27 { width: 27px; } .c28 { width: 28px; }
.combo { position: relative; height: 16px; margin-right: 2px; border: 1px solid #989898; border-radius: 2px; background: #afafaf; }
.combo select { width: 100%; height: 100%; appearance: none; }
.combo .caret { position: absolute; right: 2px; top: 4px; }
.name { width: 110px; } .size { width: 31px; }
.clipboard { width: 115px; padding-left: 10px; }
.clipboard .big { width: 22px; }
.clipboard .stack { margin-left: 8px; }
.slides { width: 95px; padding-left: 6px; }
.slides .big { width: 26px; }
.slides .stack { margin-left: 5px; }
.font { width: 206px; }
.paragraph { width: 231px; }
.paragraph .stack { margin-left: 3px; }
.paragraph .rows { width: 119px; }
.drawing { width: 266px; }
.gallery { display: flex; width: 114px; height: 49px; border: 1px solid #8c8c8c; border-radius: 3px; }
.shapes { display: grid; grid-template-columns: repeat(6, 16px); grid-template-rows: repeat(3, 16px); width: 97px; border-right: 1px solid #8c8c8c; color: #555; }
.shapes svg { width: 11px; height: 11px; }
.more { flex: 1; color: #555; }
.drawing .big { width: 32px; }
.drawing .stack { margin-left: 3px; }
.editing { width: 75px; padding-left: 7px; }
.addins { width: 42px; align-items: center; padding: 3px 0 0; }
.collapse { margin-left: auto; align-self: flex-end; width: 20px; height: 18px; }
.collapse .caret { width: 9px; height: 9px; }

/* Message bar */
.message { display: flex; align-items: center; height: 20px; margin: 0 5px 0 6px; padding: 0 7px; background: #6a5a00; gap: 5px; border-radius: 0 0 4px 4px; }
.message > svg { width: 11px; height: 11px; }
.message strong { font-weight: 600; }
.message button { height: 17px; padding: 0 6px; background: #b9b9b9; color: #222; border-radius: 2px; }
.message .dismiss { background: none; margin-left: auto; padding: 0; color: #eee; }
.dismiss svg { width: 8px; height: 8px; }

/* Work area */
.work { flex: 1 1 0; min-height: 0; display: flex; overflow: hidden; }
.thumbs { width: 186px; list-style: none; padding: 12px 0 0 6px; overflow: hidden; height: 528px; }
.thumbs li { display: flex; height: 98px; }
.thumbs span { width: 10px; margin-right: 8px; text-align: center; font-size: 10px; line-height: 8px; }
.thumb { display: flex; flex-direction: column; width: 148px; height: 84px; padding: 5px 12px 0 15px; background: #fff; border-radius: 3px; position: relative; overflow: hidden; color: #222; font-family: Lato, sans-serif; }
.selected { outline: 2px solid #dc766c; overflow: visible; }
.thumb h3 { font-size: 7px; line-height: 7px; font-weight: 300; padding: 1px 10px 2px 0; border-bottom: 1px solid #999; }
.thumb footer { margin: auto -12px 0 -15px; height: 7px; background: #b3512b; border-top: 1px solid #d5871c; font-size: 2px; line-height: 6px; text-align: center; color: #fff; border-radius: 0 0 3px 3px; }
.cover h3 { font-size: 11px; line-height: 13px; margin-top: 21px; padding: 0 0 1px; }
.cover p { font-size: 3px; line-height: 4px; margin-bottom: 6px; color: #777; }
.section { padding-left: 19px; }
.section h3 { margin-top: 22px; padding-right: 0; border: 0; }
.section footer { margin-left: -19px; }
.copy { margin-top: 5px; font-family: "Open Sans", sans-serif; font-size: 2px; line-height: 3px; white-space: nowrap; color: #111; }
.copy p { margin-bottom: 1px; }
.loose p { margin-bottom: 2px; }
.tight .copy { margin-top: 1px; }
.tight .copy p { margin-bottom: 2px; }
.tight .copy .in { padding-left: 1px; margin-bottom: 4px; }
.scroll { display: flex; flex-direction: column; align-items: center; background: #3d3d3d; padding-top: 3px; }
.scroll svg { width: 6px; height: 5px; fill: #ccc; stroke: none; }
.scroll i { width: 6px; background: #bdbdbd; border-radius: 3px; margin-top: 3px; }
.left { width: 12px; padding-bottom: 3px; }
.left i { height: 181px; margin-bottom: auto; }
.editor { flex: 1; min-width: 0; display: flex; flex-direction: column; border-left: 1px solid #777; margin-left: 1px; }
.stage { display: flex; flex: 1; border-bottom: 1px solid #8a8a8a; }
.canvas { flex: 1; display: flex; justify-content: center; align-items: flex-start; padding-top: 10px; }
.slide { width: 80%; aspect-ratio: 845 / 476; background: #fff; border: 1px solid #888; display: flex; flex-direction: column; color: #242424; font-family: Lato, sans-serif; }
.slide h2 { margin: 146px 9% 0 10%; padding-bottom: 13px; border-bottom: 1px solid #bbb; font-size: 64px; line-height: 71px; font-weight: 300; }
.slide p { margin: 5px 0 22px 83px; font-size: 16px; line-height: 22px; font-weight: 300; letter-spacing: 1px; color: #5c5f59; }
.slide p + p { margin-top: 10px; }
.slide footer { margin-top: auto; height: 36px; background: #b3512b; border-top: 4px solid #d5871c; color: #fff; font-size: 7px; font-weight: 700; line-height: 34px; text-align: center; }
.right { width: 11px; background: linear-gradient(#3d3d3d 460px, #505050 460px); padding-bottom: 14px; }
.right i { height: 29px; margin-bottom: auto; }
.right .page { height: 8px; margin-top: 3px; }
.notes { height: 30px; padding: 5px 7px; resize: none; font-size: 10px; line-height: 12px; color: #e6e6e6; }

/* Status bar */
.status { display: flex; align-items: center; height: 16px; padding: 0 2px 0 8px; background: #4d4d4d; border-top: 1px solid #444; font-weight: 600; color: #ececec; }
.status svg { width: 10px; height: 10px; }
.status button { gap: 1px; }
.lang { margin: 0 8px 0 17px; }
.tools { display: flex; align-items: center; margin-left: auto; }
.display { margin: 0 10px 0 9px; }
.views { display: flex; margin-right: 6px; }
.views button { width: 26px; height: 15px; }
.views .on { background: #5c5c5c; }
.status .sm { width: 7px; height: 7px; }
.tools input { appearance: none; width: 66px; height: 9px; margin: 0 3px; background: linear-gradient(#bbb, #bbb) center / 100% 1px no-repeat; }
.tools input::-webkit-slider-thumb { appearance: none; width: 3px; height: 8px; background: #ddd; }
.pct { margin: 0 7px 0 5px; }

/* Taskbar */
.taskbar { display: grid; grid-template-columns: 1fr auto 1fr; align-items: center; height: 31px; padding: 0 12px; background: linear-gradient(90deg, #f0e2d4, #eddccc 30%, #e9dcd2 60%, #f1dfcf); color: #5a5048; }
.taskbar svg { stroke: none; }
.widget { display: flex; gap: 5px; line-height: 10px; }
.widget em { font-style: normal; color: #b3382f; }
.globe { position: relative; }
.globe svg { width: 16px; height: 16px; }
.globe b { position: absolute; right: -2px; top: -4px; width: 9px; height: 9px; border-radius: 50%; background: #b81f26; color: #fff; font-size: 7px; line-height: 9px; text-align: center; }
.apps { display: flex; align-items: center; height: 31px; }
.apps button { width: 29px; height: 27px; position: relative; }
.apps button svg { width: 16px; height: 16px; }
.apps .current { background: #f6ece4; border-radius: 2px; width: 25px; margin: 0 2px; height: 25px; }
.open::after, .current::after { content: ""; position: absolute; bottom: 1px; left: 13px; width: 4px; height: 1px; background: #777; }
.current::after { left: 7px; width: 11px; height: 2px; bottom: 0; background: #2277bb; }
.find { display: flex; align-items: center; width: 144px; height: 20px; margin: 0 1px 0 2px; padding: 0 3px 0 7px; border-radius: 10px; background: #fcf6ef; gap: 7px; font-size: 9px; color: #777; }
.apps .find svg:first-child { width: 10px; height: 10px; stroke: #333; }
.find input { flex: 1; min-width: 0; }
.apps .find .panda { width: 29px; height: 17px; }
time { text-align: right; line-height: 11px; color: #665c55; }
```
